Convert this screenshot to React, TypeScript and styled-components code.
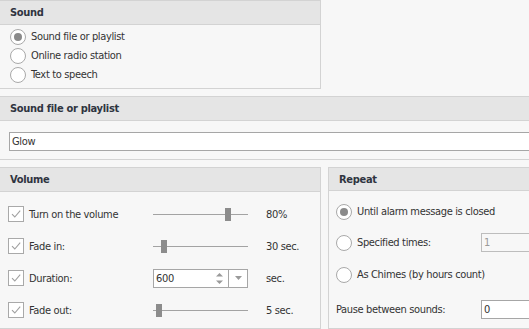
import React from "react";
import styled, { createGlobalStyle } from "styled-components";

const Global = createGlobalStyle`
  html, body { margin: 0; padding: 0; background: #f7f7f7; overflow: hidden; }
  body { font-family: "DejaVu Sans Condensed", "DejaVu Sans", sans-serif; font-size: 11px; letter-spacing: -0.35px; color: #333; }
`;

const Page = styled.div`
  width: 560px;
  margin-left: -1px;
  display: flex;
  flex-direction: column;
  gap: 7px;
`;

const Group = styled.section<{ $w?: number; $h?: number }>`
  box-sizing: border-box;
  border: 1px solid #d3d3d3;
  background: #f7f7f7;
  ${(p) => (p.$w ? `width: ${p.$w}px;` : "flex: 1;")}
  ${(p) => (p.$h ? `height: ${p.$h}px;` : "")}
  display: flex;
  flex-direction: column;
`;

const Header = styled.div`
  height: 23px;
  background: #e5e5e5;
  border-bottom: 1px solid #d3d3d3;
  display: flex;
  align-items: center;
  padding-left: 10px;
  font-weight: bold;
  font-size: 11px;
  letter-spacing: -0.3px;
  color: #2f3440;
`;

const RadioList = styled.div`
  display: flex;
  flex-direction: column;
  padding: 4px 0 0 10px;
  gap: 4px;
`;

const Row = styled.label<{ $h?: number }>`
  display: flex;
  align-items: center;
  height: ${(p) => p.$h ?? 15}px;
  white-space: nowrap;
`;

const RadioCircle = styled.span<{ $on?: boolean }>`
  box-sizing: border-box;
  width: 16px;
  height: 16px;
  border-radius: 50%;
  border: 1px solid #a9a9a9;
  background: #fff;
  margin-right: 5px;
  display: flex;
  align-items: center;
  justify-content: center;
  flex: none;
  &::after {
    content: "";
    display: ${(p) => (p.$on ? "block" : "none")};
    width: 8px;
    height: 8px;
    border-radius: 50%;
    background: #8a8a8a;
  }
`;

const Radio = ({ on, children }: { on?: boolean; children: React.ReactNode }) => (
  <Row>
    <RadioCircle $on={on} />
    {children}
  </Row>
);

const FileBody = styled.div`
  padding: 11px 0 8px 9px;
`;

const TextInput = styled.div<{ $w?: number; $disabled?: boolean }>`
  box-sizing: border-box;
  height: 19px;
  ${(p) => (p.$w ? `width: ${p.$w}px;` : "width: 560px;")}
  border: 1px solid ${(p) => (p.$disabled ? "#bdbdbd" : "#a6a6a6")};
  background: ${(p) => (p.$disabled ? "#f7f7f7" : "#fff")};
  color: ${(p) => (p.$disabled ? "#9a9a9a" : "#333")};
  padding-left: 2px;
  display: flex;
  align-items: center;
`;

const BottomRow = styled.div`
  display: flex;
  gap: 7px;
`;

const VolumeBody = styled.div`
  display: grid;
  grid-template-columns: 145px 95px auto;
  grid-auto-rows: 32px;
  padding: 6px 0 0 8px;
  align-items: center;
`;

const VRow = styled.div`
  display: contents;
`;

const CheckCell = styled.div`
  display: flex;
  align-items: center;
  white-space: nowrap;
`;

const CheckBox = styled.span`
  box-sizing: border-box;
  width: 16px;
  height: 16px;
  border: 1px solid #a9a9a9;
  background: #fff;
  margin-right: 5px;
  display: flex;
  align-items: center;
  justify-content: center;
  flex: none;
`;

const Check = () => (
  <CheckBox>
    <svg width="12" height="12" viewBox="0 0 12 12">
      <path d="M2 6.2 L4.8 9 L10.2 2.6" fill="none" stroke="#a0a0a0" strokeWidth="1.1" />
    </svg>
  </CheckBox>
);

const Slider = styled.div`
  position: relative;
  height: 15px;
  width: 95px;
  &::before {
    content: "";
    position: absolute;
    left: 0;
    right: 0;
    top: 7px;
    height: 1px;
    background: #a3a3a3;
  }
`;

const Thumb = styled.span`
  position: absolute;
  top: 1px;
  width: 6px;
  height: 13px;
  background: #8c8c8c;
`;

const ValueCell = styled.div`
  padding-left: 18px;
  white-space: nowrap;
`;

const Spin = styled.div`
  box-sizing: border-box;
  width: 95px;
  height: 19px;
  border: 1px solid #a6a6a6;
  background: #fff;
  display: flex;
  align-items: stretch;
`;

const SpinText = styled.div`
  flex: 1;
  padding-left: 2px;
  display: flex;
  align-items: center;
`;

const SpinArrows = styled.div`
  width: 18px;
  display: flex;
  align-items: center;
  justify-content: center;
`;

const DropBtn = styled.div`
  width: 18px;
  border-left: 1px solid #a6a6a6;
  display: flex;
  align-items: center;
  justify-content: center;
`;

const RepeatBody = styled.div`
  display: flex;
  flex-direction: column;
  padding: 5px 0 0 7px;
`;

const RRow = styled.div<{ $h: number }>`
  display: flex;
  align-items: center;
  height: ${(p) => p.$h}px;
  white-space: nowrap;
`;

const RLabel = styled.div`
  width: 145px;
  display: flex;
  align-items: center;
`;

const VolumeRow = ({
  label,
  children,
  value,
}: {
  label: string;
  children: React.ReactNode;
  value: string;
}) => (
  <VRow>
    <CheckCell>
      <Check />
      {label}
    </CheckCell>
    {children}
    <ValueCell>{value}</ValueCell>
  </VRow>
);

export default function App() {
  return (
    <>
      <Global />
      <Page>
        <Group $w={322} $h={89}>
          <Header>Sound</Header>
          <RadioList>
            <Radio on>Sound file or playlist</Radio>
            <Radio>Online radio station</Radio>
            <Radio>Text to speech</Radio>
          </RadioList>
        </Group>
        <Group $h={65}>
          <Header>Sound file or playlist</Header>
          <FileBody>
            <TextInput>Glow</TextInput>
          </FileBody>
        </Group>
        <BottomRow>
          <Group $w={322} $h={162}>
            <Header>Volume</Header>
            <VolumeBody>
              <VolumeRow label="Turn on the volume" value="80%">
                <Slider>
                  <Thumb style={{ left: 72 }} />
                </Slider>
              </VolumeRow>
              <VolumeRow label="Fade in:" value="30 sec.">
                <Slider>
                  <Thumb style={{ left: 8 }} />
                </Slider>
              </VolumeRow>
              <VolumeRow label="Duration:" value="sec.">
                <Spin>
                  <SpinText>600</SpinText>
                  <SpinArrows>
                    <svg width="9" height="13" viewBox="0 0 9 13">
                      <path d="M1 4.5 L4.5 1 L8 4.5 Z" fill="#9a9a9a" />
                      <path d="M1 8.5 L4.5 12 L8 8.5 Z" fill="#9a9a9a" />
                    </svg>
                  </SpinArrows>
                  <DropBtn>
                    <svg width="7" height="4" viewBox="0 0 7 4">
                      <path d="M0 0 L7 0 L3.5 4 Z" fill="#9a9a9a" />
                    </svg>
                  </DropBtn>
                </Spin>
              </VolumeRow>
              <VolumeRow label="Fade out:" value="5 sec.">
                <Slider>
                  <Thumb style={{ left: 3 }} />
                </Slider>
              </VolumeRow>
            </VolumeBody>
          </Group>
          <Group $h={162}>
            <Header>Repeat</Header>
            <RepeatBody>
              <RRow $h={31}>
                <RadioCircle $on />
                Until alarm message is closed
              </RRow>
              <RRow $h={31}>
                <RLabel>
                  <RadioCircle />
                  Specified times:
                </RLabel>
                <TextInput $w={60} $disabled>
                  1
                </TextInput>
              </RRow>
              <RRow $h={33}>
                <RadioCircle />
                As Chimes (by hours count)
              </RRow>
              <RRow $h={37}>
                <RLabel>Pause between sounds:</RLabel>
                <TextInput $w={60}>0</TextInput>
              </RRow>
            </RepeatBody>
          </Group>
        </BottomRow>
      </Page>
    </>
  );
}
